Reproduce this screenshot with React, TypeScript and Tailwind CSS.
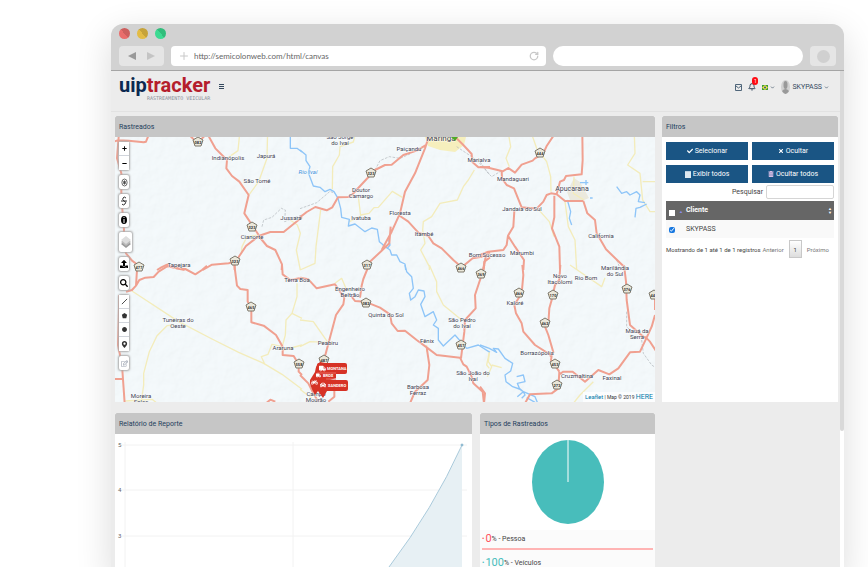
import { FaCheck, FaTimes, FaTrashAlt, FaPlus, FaMinus, FaUpload, FaSearch, FaMapMarkerAlt, FaRegEdit, FaCar, FaMotorcycle, FaTruck, FaCircle } from 'react-icons/fa';
import { Bell, ChevronDown, Plus, RotateCw } from 'lucide-react';

// each tile is drawn at three times its size on the map
const tiles = [
    {
        x: 112, y: 130,
        yellow: 'M384 0L378 62 345 85M467 0L465 85 440 155 412 193M535 270L556 285 565 310 553 360 565 420M440 315L405 320 390 350 388 370',
        rail: 'M450 290L455 270 480 262 508 235 520 240 518 275 555 260 570 255',
        river: 'M535 0V55H555L570 66',
        road: 'M0 36L18 31 50 32 95 37 102 35 110 15M20 21L15 85 28 130 28 200 36 300 34 340 42 370 60 392 82 408M232 15L245 28 262 34 280 15M288 15L310 55 345 90 343 115 360 138 382 155 410 195 397 250 440 315M272 420L300 404 350 400 372 394 382 378 402 348 440 318 475 306 515 306 540 286 570 262M440 318L465 348 490 360 510 403 509 420M368 400V420M135 420L148 412 165 404 180 412 218 420',
    },
    {
        x: 300, y: 130,
        yellow: 'M165 15L160 36 120 50 118 75 98 110 97 178M62 240L48 350 45 400 0 420M175 200L182 258 148 275M182 255L207 250 222 233 235 232 277 184 307 202M523 120L505 150 490 170 472 210 420 220 395 260 370 275 368 300 375 340 362 360 388 410 388 420',
        rail: 'M0 236L50 218 90 184 105 190M225 120L240 92 268 80 300 85 330 72M470 50L515 80 535 95 570 135',
        river: 'M0 60L18 75 18 92 30 110 25 128 40 168 60 172 75 185 90 178 102 185 114 205 122 235 125 262 148 268 145 288 165 282 195 305 215 294 232 298 238 335 250 345 270 360 275 375 290 375 300 395 315 402 317 420M248 345L262 355 270 345 266 330',
        road: 'M0 262L20 246 46 231 80 241 97 232 114 202 145 201 158 192 200 147 225 120 255 105 275 104 310 75 350 62 380 44M388 15L375 55 345 130 315 185 300 250 275 305 245 360M272 290L268 340 245 362 205 400M300 258L325 275 355 308 385 318 400 340 425 355 460 390 485 412 518 385 545 380 570 367M460 15L490 45 515 72 517 96 535 112 570 111M550 420L553 395 570 382',
    },
    {
        x: 480, y: 130,
        yellow: 'M86 15L92 50 78 85 88 110M156 15L170 55 200 95 212 140 213 185M463 15L465 70 443 105 480 130 488 210 510 245 528 245M488 155H528M175 238L208 275 222 320M255 215L265 290 285 330 290 420M282 140L280 190 312 210',
        rail: 'M0 95L25 130 35 140 68 120M410 390L422 420',
        river: 'M410 170L425 190 440 185 450 195 470 185 480 195 475 215 495 218M465 262L468 235 480 232 500 222M262 210L272 245 268 265 275 285M300 158H325M318 150V165M330 204H338',
        road: 'M0 111L25 113 68 124 85 114 105 128 125 104 158 92 165 85 190 70 200 48 222 15M65 124L66 145 80 165 102 175 120 220 125 232 170 236 190 215 200 195 213 190 230 193 255 213 310 213M307 15L308 90 305 133 258 138 252 150 240 155 230 193M223 197L223 262 216 295 238 350 240 420M310 213L322 250 345 270 350 310 378 358 430 408M103 243L100 290 84 317 80 345 70 360 25 365 0 375M84 317L105 350 132 390 130 420M18 375L10 420',
    },
    {
        x: 112, y: 265,
        yellow: 'M60 78L200 170 300 222 380 262 455 295 510 328 570 373M185 180L165 182 135 212 112 260 95 325 95 360 88 410M512 245L480 238 468 268 448 275 458 297M555 55L555 95 540 145 522 165 520 210 512 240M540 145L570 160M40 408L120 403 132 412M515 255L570 240',
        rail: '',
        river: '',
        road: 'M42 80L60 75 72 62 75 15M72 62L82 45 100 38 125 36 140 20 165 4 180 5 195 10 220 12 250 28 270 15 285 2M367 0L375 62 385 72 407 75 407 110 418 125 418 172 455 182 492 210 512 245 512 270 545 273 560 298 560 320 570 330M510 0L512 28 535 45 570 38M22 90L18 240 30 300 38 415M0 342H30M462 415L475 404 490 410',
    },
    {
        x: 300, y: 265,
        yellow: 'M105 55L125 40 140 75M0 165L40 170 82 230M0 245L30 230 82 232M0 373L35 400M388 0L410 50 410 80 430 120 485 165M380 240V260M568 262L560 300 568 310',
        rail: '',
        river: 'M315 0L320 20 335 35 340 70 328 85 332 105 345 95 355 75 372 78 375 95 362 118 375 155 400 140 410 165 400 180 415 190 415 225 430 243 465 210 500 250 535 240 570 262',
        road: 'M0 38L25 43 50 70 105 58 133 98M205 5L190 42 185 62 180 98M133 98L130 118 108 150 88 225 72 285M155 95L165 108 195 110 240 128 270 148 275 175 293 198 315 197 350 225 380 247 410 270 480 278 490 298 500 305 515 335 520 355 548 380 552 415M380 247L388 300 383 345 345 380 330 415M553 0L545 30 525 90 527 130 495 165 493 200 483 280M0 330L25 355 40 385 55 410M85 410L103 395 103 378',
    },
    {
        x: 480, y: 265,
        yellow: 'M28 262L25 290 35 305 22 335M35 300L65 308M270 0L365 65 375 38M340 350L300 390 280 415',
        rail: 'M440 140L440 185 450 195M485 225L490 265 515 300 530 310',
        river: 'M0 240L28 250 50 262 40 250 55 252 75 280 98 295 92 318 75 330 78 350 98 365 118 372 130 380 112 395M110 335L130 330 135 350 112 355 118 370 130 380 135 390 125 400M130 380L165 395 172 412M140 398L165 412',
        road: 'M127 0L130 30 125 85 103 120 108 145 125 175 130 200 165 240 215 272 213 285 238 320M241 0L238 45 225 60 215 105 208 130 205 175 195 185 205 210 220 262 210 275M236 330L250 320 278 320 315 350 355 315 388 328 415 310 450 262 480 260 500 218 515 185 525 150M495 215L510 230 528 258M432 0L438 50 440 105 450 180 490 215 500 220M525 80V135M238 320L235 370 215 385 150 388 135 415M0 365L15 385 12 415',
    },
];

const places: [string, number, number][] = [
    ['Indianópolis', 228, 160], ['Japurá', 266, 158], ['São Tomé', 257, 183], ['Jussara', 291, 220],
    ['Cianorte', 252, 239], ['Tapejara', 179, 267], ['São Jorge', 340, 139], ['do Ivaí', 340, 145],
    ['Paiçandu', 409, 151], ['Marialva', 479, 162], ['Doutor', 361, 192], ['Camargo', 361, 198],
    ['Ivatuba', 361, 220], ['Floresta', 400, 215], ['Itambé', 424, 236], ['Mandaguari', 513, 181],
    ['Jandaia do Sul', 522, 211], ['California', 601, 238], ['Bom Sucesso', 487, 257], ['Marumbi', 522, 255],
    ['Marilândia', 615, 270], ['do Sul', 615, 276], ['Tuneiras do', 178, 322], ['Oeste', 178, 328],
    ['Terra Boa', 297, 282], ['Araruna', 283, 350], ['Moreira', 141, 398], ['Sales', 141, 404],
    ['Engenheiro', 350, 291], ['Beltrão', 350, 297], ['Quinta do Sol', 386, 317], ['Peabiru', 328, 345],
    ['Fênix', 427, 343], ['São Pedro', 462, 322], ['do Ivaí', 462, 328], ['São João do', 473, 375],
    ['Ivaí', 473, 381], ['Barbosa', 418, 389], ['Ferraz', 418, 395], ['Novo', 560, 278],
    ['Itacolomi', 560, 284], ['Rio Bom', 586, 280], ['Kaloré', 515, 305], ['Borrazópolis', 537, 355],
    ['Cruzmaltina', 577, 378], ['Faxinal', 612, 380], ['Mauá da', 637, 333], ['Serra', 637, 339],
    ['Campo', 316, 396], ['Mourão', 316, 402],
];

const shields: [string, number, number][] = [
    ['082', 198, 142], ['323', 252, 227], ['323', 235, 261], ['477', 139, 267], ['323', 371, 173],
    ['444', 540, 153], ['317', 367, 265], ['466', 461, 268], ['465', 251, 307], ['558', 299, 364],
    ['082', 366, 303], ['457', 461, 345], ['466', 519, 293], ['170', 553, 295], ['376', 627, 289],
    ['462', 545, 323], ['453', 555, 364], ['272', 557, 385], ['369', 481, 274], ['487', 324, 360],
    ['445', 654, 295],
];

const MapDrawing = () => (
    <svg viewBox="115 137 540 265" preserveAspectRatio="xMidYMid slice" className="block h-[265px] w-full bg-[#f5fafc]" fill="none">
        <defs>
            <filter id="relief" x="0" y="0" width="100%" height="100%">
                <feTurbulence type="fractalNoise" baseFrequency="0.09" numOctaves="4" seed="4" />
                <feDiffuseLighting surfaceScale="1.6" lightingColor="#f4fbff">
                    <feDistantLight azimuth="225" elevation="60" />
                </feDiffuseLighting>
            </filter>
        </defs>
        <rect x="115" y="137" width="540" height="265" filter="url(#relief)" opacity=".1" />
        <path d="M425 137H466L464 145 455 152 440 150 428 146Z" fill="#f6efbd" />
        <path d="M567 192L574 178 580 182 589 198 582 201 570 200Z" fill="#ebe9dd" />
        {tiles.map(tile => (
            <g key={`${tile.x}-${tile.y}`} transform={`translate(${tile.x} ${tile.y}) scale(.33333)`} strokeLinejoin="round">
                <path d={tile.yellow} stroke="#f3ecbb" strokeWidth="4" />
                <path d={tile.rail} stroke="#aeb4b8" strokeWidth="2" strokeDasharray="8 4" />
                <path d={tile.river} stroke="#8ec5f8" strokeWidth="4" />
                <path d={tile.road} stroke="#f0a090" strokeWidth="6" />
            </g>
        ))}
        {shields.map(([code, x, y]) => (
            <g key={`${x}-${y}`}>
                <path d={`M${x - 5} ${y - 2}L${x} ${y - 5} ${x + 5} ${y - 2} ${x + 3} ${y + 4}H${x - 3}Z`} fill="#ebe8da" stroke="#7d786c" />
                <text x={x} y={y + 2} textAnchor="middle" className="fill-[#333333] text-[4px] font-bold">{code}</text>
            </g>
        ))}
        <g textAnchor="middle" className="fill-[#3d4253] stroke-white/70 text-[6px] [paint-order:stroke]">
            {places.map(([name, x, y]) => (
                <text key={`${name}-${y}`} x={x} y={y}>{name}</text>
            ))}
            <text x="441" y="141" className="text-[8px]">Maringá</text>
            <text x="572" y="191" className="text-[7px]">Apucarana</text>
            <text x="308" y="174" className="fill-[#3d8edb] italic">Rio Ivaí</text>
        </g>
        <path d="M451 137H458L455 141Z" fill="#4fa827" />
    </svg>
);

const MapButton = ({ label, className = '', children }) => (
    <button aria-label={label} className={`flex h-[14px] w-[10px] items-center justify-center bg-white text-[6px] text-black ${className}`}>
        {children}
    </button>
);

const single = 'rounded-xs shadow-[0_0_2px_1px_#aaaaaa]';

const MapControls = () => (
    <div className="absolute top-[5px] left-1 flex flex-col items-start gap-[5px]">
        <div className="divide-y divide-gray-300 rounded-xs shadow-[0_0_2px_1px_#aaaaaa]">
            <MapButton label="Aproximar"><FaPlus className="size-[5px]" /></MapButton>
            <MapButton label="Afastar"><FaMinus className="size-[5px]" /></MapButton>
        </div>
        <MapButton label="Centralizar" className={single}>
            <svg viewBox="0 0 8 10" className="h-[9px] w-[7px]" fill="none" stroke="#555555">
                <ellipse cx="4" cy="5" rx="3" ry="4" />
                <ellipse cx="4" cy="5" rx="1" ry="2" fill="#444444" />
            </svg>
        </MapButton>
        <MapButton label="Trajeto" className={single}>
            <svg viewBox="0 0 8 10" className="h-[10px] w-[8px]" fill="none" stroke="#333333">
                <path d="M6 2Q4 0 3 2 2 4 4 5 7 6 5 8 3 10 2 8M1 5H7" />
            </svg>
        </MapButton>
        <MapButton label="Informações" className={single}>
            <svg viewBox="0 0 8 10" className="h-[10px] w-[8px]">
                <ellipse cx="4" cy="5" rx="3" ry="4" fill="#000000" />
                <path d="M4 2V3M4 4V8" stroke="#ffffff" />
            </svg>
        </MapButton>
        <button aria-label="Camadas" className={`flex h-[20px] w-[13px] items-center justify-center bg-white ${single}`}>
            <svg viewBox="0 0 12 14" className="h-[14px] w-[12px]">
                <path d="M1 9L6 5 11 9 6 13Z" fill="#9a9a9a" />
                <path d="M1 7L6 3 11 7 6 11Z" fill="#bbbbbb" />
                <path d="M1 5L6 1 11 5 6 9Z" fill="#dddddd" />
            </svg>
        </button>
        <MapButton label="Enviar" className={single}><FaUpload className="size-[8px]" /></MapButton>
        <MapButton label="Buscar" className={single}><FaSearch className="size-[8px]" /></MapButton>
        <div className="divide-y divide-gray-300 rounded-xs shadow-[0_0_2px_1px_#aaaaaa]">
            <MapButton label="Desenhar linha">
                <svg viewBox="0 0 8 8" className="size-[7px]" stroke="#333333"><path d="M1 7L7 1" /></svg>
            </MapButton>
            <MapButton label="Desenhar polígono">
                <svg viewBox="0 0 8 8" className="size-[7px]" fill="#333333"><path d="M4 1L7 3 6 7H2L1 3Z" /></svg>
            </MapButton>
            <MapButton label="Desenhar círculo"><FaCircle className="size-[5px] text-[#333333]" /></MapButton>
            <MapButton label="Marcador"><FaMapMarkerAlt className="size-[7px] text-[#333333]" /></MapButton>
        </div>
        <MapButton label="Editar" className={single}><FaRegEdit className="size-[7px] text-gray-400" /></MapButton>
    </div>
);

const Vehicles = () => (
    <svg viewBox="308 360 42 40" className="absolute top-[223px] left-[193px] h-[40px] w-[42px]">
        <g fill="#d63226">
            <rect x="317" y="363" width="30" height="11" rx="2" />
            <rect x="317" y="380" width="31" height="11" rx="2" />
            <path d="M320 362Q316 364 315 372L310 380Q309 385 315 395L318 391 323 398 327 391V381L336 378V373L325 363Z" />
        </g>
        <path d="M317 373H336M326 379H336" stroke="#e8695f" />
        <FaTruck x="319" y="365" size="7" color="#fff" />
        <FaTruck x="316" y="373" size="5" color="#fff" />
        <FaMotorcycle x="311" y="379" size="7" color="#fff" />
        <FaCar x="320" y="382" size="6" color="#fff" />
        <g className="fill-white text-[4px] font-bold">
            <text x="327" y="370">MONTANA</text>
            <text x="323" y="377">BROS</text>
            <text x="328" y="387">SANDERO</text>
        </g>
    </svg>
);

const Panel = ({ title, className = '', children }) => (
    <section className={`flex flex-col bg-white ${className}`}>
        <h2 className="h-[21px] rounded-t-xs bg-[#c6c6c6] px-1 text-[7px] leading-[22px] text-[#23405c]">{title}</h2>
        {children}
    </section>
);

const ActionButton = ({ icon, children }) => (
    <button className="flex h-[18px] items-center justify-center gap-[2px] bg-[#1a5584] text-[7px] text-white">
        {icon}{children}
    </button>
);

const Filters = () => (
    <div className="px-1 pt-[5px] text-[7px] text-[#444444]">
        <div className="grid grid-cols-2 gap-x-1 gap-y-[5px]">
            <ActionButton icon={<FaCheck className="size-[6px]" />}>Selecionar</ActionButton>
            <ActionButton icon={<FaTimes className="size-[6px]" />}>Ocultar</ActionButton>
            <ActionButton icon={<svg viewBox="0 0 6 7" className="h-[7px] w-[6px]"><path d="M0 0H6V7H0Z" fill="#bcd0e0" /><path d="M0 2H6M0 4H6M0 6H6" stroke="#ffffff" /></svg>}>Exibir todos</ActionButton>
            <ActionButton icon={<FaTrashAlt className="size-[6px] text-[#e3c4ec]" />}>Ocultar todos</ActionButton>
        </div>
        <div className="mt-[2px] flex items-center justify-end gap-[3px]">
            <label htmlFor="search">Pesquisar</label>
            <input id="search" type="text" className="h-[14px] w-[68px] rounded-xs border border-[#d5d5d5] bg-white px-1" />
        </div>
        <table className="mt-[2px] w-full text-left">
            <thead>
                <tr className="h-[19px] bg-[#666666] text-white">
                    <th className="w-[20px] px-[3px] align-bottom">
                        <span className="flex items-end gap-1">
                            <input type="checkbox" aria-label="Selecionar todos" className="mb-[4px] size-[6px] appearance-none bg-white" />
                            <span className="text-[4px] leading-[16px] text-[#8d8df0]">▲</span>
                        </span>
                    </th>
                    <th className="font-bold">Cliente</th>
                    <th className="w-[6px] pr-[1px] text-[4px] leading-[4px]">▲<br />▼</th>
                </tr>
            </thead>
            <tbody>
                <tr className="h-[18px] bg-[#f9f9f9]">
                    <td className="px-[3px]">
                        <input id="client" type="checkbox" defaultChecked className="mt-[2px] block size-[6px] accent-[#1878e0]" />
                    </td>
                    <td colSpan={2}><label htmlFor="client">SKYPASS</label></td>
                </tr>
            </tbody>
        </table>
        <div className="mt-[2px] flex items-center text-[6px]">
            <span className="mr-auto whitespace-nowrap">Mostrando de 1 até 1 de 1 registros</span>
            <button className="text-[#777777]">Anterior</button>
            <button className="mx-[5px] h-[18px] w-[13px] shrink-0 border border-[#c8c8c8] bg-linear-to-b from-white to-[#dddddd]">1</button>
            <button className="mr-[5px] text-[#777777]">Próximo</button>
        </div>
    </div>
);

const ReportChart = () => (
    <svg viewBox="0 0 357 133" preserveAspectRatio="xMinYMin meet" className="block w-full" fill="none">
        <path d="M6 11H352M6 56H352M6 102H352M10 8V133M178 8V133" stroke="#f2f2f2" />
        <path d="M274 133Q318 75 347 11V133Z" fill="#e7f0f4" />
        <path d="M274 133Q318 75 347 11" stroke="#a9cadb" />
        <circle cx="347" cy="11" r="1" fill="#8bb8d0" stroke="#8bb8d0" />
        <g className="fill-[#666666] text-[6px]">
            <text x="3" y="13">5</text>
            <text x="3" y="58">4</text>
            <text x="3" y="104">3</text>
        </g>
    </svg>
);

const Types = () => (
    <>
        <svg viewBox="0 0 175 96" className="block h-[96px] w-full">
            <ellipse cx="88" cy="48" rx="36" ry="42" fill="#48bdbb" />
            <path d="M88 6V48" stroke="#ffffff" />
        </svg>
        <ul className="flex-1 bg-[#fbfbfb] px-[2px] text-[7px] text-[#444444]">
            <li className="flex h-[20px] items-center border-b-2 border-[#ffb4b4]">
                <span className="mr-[1px] text-[7px] text-[#ff4d5a]">•</span>
                <span className="text-[11px] text-[#ff4d5a]">0</span>% - Pessoa
            </li>
            <li className="flex h-[26px] items-center">
                <span className="mr-[1px] text-[7px] text-[#48bdbb]">•</span>
                <span className="text-[11px] text-[#48bdbb]">100</span>% - Veículos
            </li>
        </ul>
    </>
);

const BrowserBar = () => (
    <div className="rounded-t-xl border-b border-[#a5a5a5] bg-[#d2d2d2] px-2 pt-1">
        <div className="flex gap-[7px]">
            <span className="size-[11px] rounded-full bg-linear-to-tr from-[#ea6d6c] from-50% to-[#cd5f5e] to-50%" />
            <span className="size-[11px] rounded-full bg-linear-to-tr from-[#e3bc46] from-50% to-[#c6a33a] to-50%" />
            <span className="size-[11px] rounded-full bg-linear-to-tr from-[#3cda92] from-50% to-[#30bd7b] to-50%" />
        </div>
        <div className="mt-[7px] flex h-[24px] gap-[7px] pb-1">
            <div className="flex h-[20px] w-[45px] shrink-0 items-center justify-around rounded-sm bg-[#e5e5e5] px-1">
                <button aria-label="Voltar"><svg viewBox="0 0 8 8" className="size-2" fill="#999999"><path d="M8 0V8L0 4Z" /></svg></button>
                <button aria-label="Avançar"><svg viewBox="0 0 8 8" className="size-2" fill="#c4c4c4"><path d="M0 0V8L8 4Z" /></svg></button>
            </div>
            <div className="flex h-[20px] min-w-0 flex-[378] items-center rounded-sm bg-white px-[7px]">
                <Plus className="size-[12px] text-[#c8c8c8]" />
                <input aria-label="Endereço" defaultValue="http://semicolonweb.com/html/canvas" className="ml-1 min-w-0 flex-1 font-['Lato',sans-serif] text-[8px] text-[#666666]" />
                <button aria-label="Recarregar"><RotateCw className="size-[10px] text-[#c8c8c8]" strokeWidth={3} /></button>
            </div>
            <input aria-label="Pesquisa" className="h-[20px] min-w-0 flex-[247] rounded-full bg-white px-[7px] text-[8px]" />
            <button aria-label="Menu do navegador" className="flex h-[20px] w-[26px] shrink-0 items-center justify-center rounded-sm bg-[#e5e5e5]">
                <span className="size-[13px] rounded-full bg-[#d0d0d0]" />
            </button>
        </div>
    </div>
);

const Header = () => (
    <header className="flex h-[41px] items-start border-b border-[#e2e2e2] pt-1 pr-[15px] pl-2 text-[#34495e]">
        <a href="#" className="flex flex-col items-end">
            <span className="text-[20px] leading-[20px] font-bold text-[#b51e2c]"><span className="text-[#0b2950]">uip</span>tracker</span>
            <span className="font-['DejaVu_Sans_Mono',monospace] text-[5px] leading-[6px] text-[#8b8f9a]">RASTREAMENTO VEICULAR</span>
        </a>
        <button aria-label="Menu" className="mt-[9px] ml-[9px]">
            <svg viewBox="0 0 5 6" className="h-[6px] w-[5px]"><path d="M0 .5H5M0 2.500H5M0 4.500H5" stroke="#34495e" /></svg>
        </button>
        <div className="mt-[4px] ml-auto flex h-[16px] items-center text-[7px]">
            <button aria-label="Mensagens">
                <svg viewBox="0 0 7 7" className="size-[7px]" fill="none" stroke="#50667a"><path d="M.5.5H6.5V6.5H.5ZM1 2L3.500 4 6 2" /></svg>
            </button>
            <button aria-label="Notificações" className="relative ml-[6px]">
                <Bell className="size-[8px]" strokeWidth={3} />
                <span className="absolute -top-[6px] left-[4px] h-[8px] w-[6px] rounded-full bg-[#ff0b12] text-[5px] leading-[8px] text-white">1</span>
            </button>
            <button aria-label="Idioma" className="ml-[6px] flex items-center gap-[2px]">
                <svg viewBox="0 0 6 5" className="h-[5px] w-[6px]"><path d="M0 0H6V5H0Z" fill="#3f9b38" /><path d="M0 2.500L3 0 6 2.500 3 5Z" fill="#f1e446" /><circle cx="3" cy="2.500" r="1" fill="#28549c" /></svg>
                <ChevronDown className="size-[5px]" strokeWidth={3} />
            </button>
            <button className="ml-[6px] flex items-center gap-[2px]">
                <svg viewBox="0 0 9 14" className="h-[14px] w-[9px]"><ellipse cx="4.500" cy="7" rx="4.500" ry="7" fill="#d0d0d0" /><ellipse cx="4.500" cy="5" rx="2" ry="4" fill="#999999" /><path d="M1 11Q4.500 7 8 11 6 14 4.500 14 3 14 1 11Z" fill="#999999" /></svg>
                SKYPASS
                <ChevronDown className="size-[5px]" strokeWidth={3} />
            </button>
        </div>
    </header>
);

export default function App() {
    return (
        <div className="flex h-screen flex-col overflow-hidden bg-white pt-6 pr-6 pl-[111px] font-['Roboto','Liberation_Sans',sans-serif]">
            <div className="flex flex-1 flex-col rounded-t-xl bg-[#ececec] shadow-[0_10px_36px_rgba(0,0,0,0.14)]">
                <BrowserBar />
                <div className="relative flex flex-1 flex-col">
                    <div className="absolute inset-y-0 right-0 w-1 bg-white">
                        <div className="h-[360px] rounded-b-xs bg-[#d9d9d9]" />
                    </div>
                    <Header />
                    <main className="grid flex-1 grid-cols-[minmax(0,1fr)_176px] gap-[7px] pt-1 pr-[6px] pl-1">
                        <div className="flex flex-col gap-[11px]">
                            <Panel title="Rastreados">
                                <div className="relative overflow-hidden">
                                    <MapDrawing />
                                    <MapControls />
                                    <Vehicles />
                                    <div className="absolute right-0 bottom-0 bg-white/70 px-[2px] text-[5px] leading-[10px] text-[#333333]">
                                        <a href="#" className="text-[6px] text-[#0078a8]">Leaflet</a> | Map © 2019 <a href="#" className="text-[7px] text-[#0078a8]">HERE</a>
                                    </div>
                                </div>
                            </Panel>
                            <div className="grid flex-1 grid-cols-[357fr_175fr] gap-2">
                                <Panel title="Relatório de Reporte"><ReportChart /></Panel>
                                <Panel title="Tipos de Rastreados"><Types /></Panel>
                            </div>
                        </div>
                        <Panel title="Filtros" className="h-[286px]"><Filters /></Panel>
                    </main>
                </div>
            </div>
        </div>
    );
}
